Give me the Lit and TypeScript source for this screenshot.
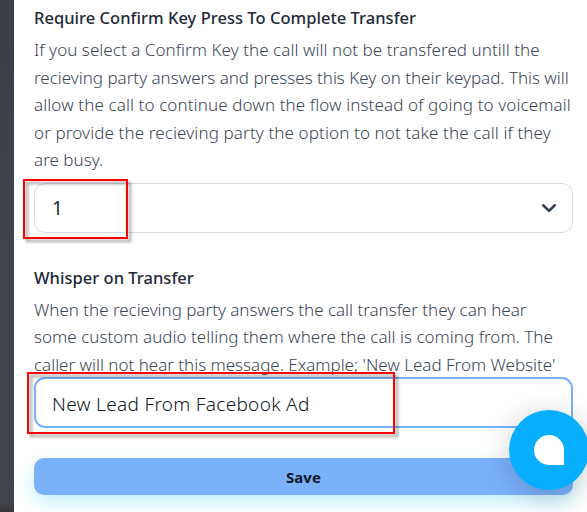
import { LitElement, html, css } from "lit";
import { customElement } from "lit/decorators.js";

@customElement("app-root")
export class AppRoot extends LitElement {
  static styles = css`
    :host { display: block; position: relative; width: 587px; height: 512px; overflow: hidden;
      background: #fff; font-family: "Segoe UI", "Noto Sans", sans-serif; color: #1f2937; }
    * { box-sizing: border-box; }
    .layout { display: flex; height: 100%; }
    .rail { width: 14px; flex: none; background: linear-gradient(#3a3e47, #40454c 55%, #40454b 98%, #37363c); }
    .form { flex: 1; min-width: 0; padding: 4px 14px 0 20px; display: flex; flex-direction: column; }
    .title { margin: 0; font-size: 16.5px; line-height: 28px; height: 32px; font-weight: 500; white-space: nowrap; letter-spacing: 0.03px; }
    .help { margin: 0; font-size: 17px; line-height: 27.5px; color: #3c4655; font-weight: 300; white-space: nowrap; }
    .line { display: block; width: max-content; }
    .select { height: 50px; margin-top: 9px; border: 1px solid #d8dadf; border-radius: 11px; padding: 0 15px 0 17px;
      display: flex; align-items: center; justify-content: space-between; font-size: 19px; }
    .whisper { margin-top: 31px; }
    .short { height: 81px; }
    .input { height: 51px; border: 2px solid #79b1f9; border-radius: 11px; background: #fff; padding: 3px 16px 0;
      display: flex; align-items: center; font-size: 19px; font-weight: 300; color: #111827; letter-spacing: 0.31px; }
    .save { height: 37px; margin-top: 30px; border: 0; border-radius: 10px; background: #79b1fb; color: #111827;
      font-family: inherit; font-weight: 700; font-size: 15px; padding: 2px 0 0; box-shadow: 0 8px 18px rgba(40, 210, 240, .28); }
    .mark { position: absolute; border: 2px solid #ff0000; filter: drop-shadow(3px 3px 1.5px rgba(0, 0, 0, .4)); }
    .mark-key { left: 23px; top: 179px; width: 105px; height: 60px; }
    .mark-message { left: 27px; top: 372px; width: 368px; height: 62px; }
    .chat { position: absolute; left: 509px; top: 410px; width: 80px; height: 80px; border-radius: 50%; background: #08aeff;
      display: grid; place-items: center; box-shadow: 0 5px 30px rgba(0, 0, 0, .2); }
    .bubble { width: 30px; height: 30px; background: #fff; border-radius: 15px 15px 0 15px; }
  `;

  private lines(rows: [string, number][]) {
    return rows.map(([text, spacing]) => html`<span class="line" style="letter-spacing:${spacing}px">${text}</span>`);
  }

  render() {
    return html`
      <div class="layout">
        <div class="rail"></div>
        <div class="form">
          <h3 class="title">Require Confirm Key Press To Complete Transfer</h3>
          <p class="help">${this.lines([
            ["If you select a Confirm Key the call will not be transfered untill the", 0.05],
            ["recieving party answers and presses this Key on their keypad. This will", -0.01],
            ["allow the call to continue down the flow instead of going to voicemail", 0.11],
            ["or provide the recieving party the option to not take the call if they", 0.12],
            ["are busy.", 0.02],
          ])}</p>
          <div class="select">
            <span>1</span>
            <svg width="16" height="10" viewBox="0 0 16 10"><path d="M2.2 2.3 8 7.9 13.8 2.3" fill="none" stroke="#374151" stroke-width="2.6" stroke-linecap="round" stroke-linejoin="round"/></svg>
          </div>
          <h3 class="title whisper">Whisper on Transfer</h3>
          <p class="help short">${this.lines([
            ["When the recieving party answers the call transfer they can hear", -0.02],
            ["some custom audio telling them where the call is coming from. The", 0.03],
            ["caller will not hear this message. Example; 'New Lead From Website'", -0.01],
          ])}</p>
          <div class="input"><span>New Lead From Facebook Ad</span></div>
          <button class="save">Save</button>
        </div>
      </div>
      <div class="mark mark-key"></div>
      <div class="mark mark-message"></div>
      <div class="chat"><div class="bubble"></div></div>
    `;
  }
}
